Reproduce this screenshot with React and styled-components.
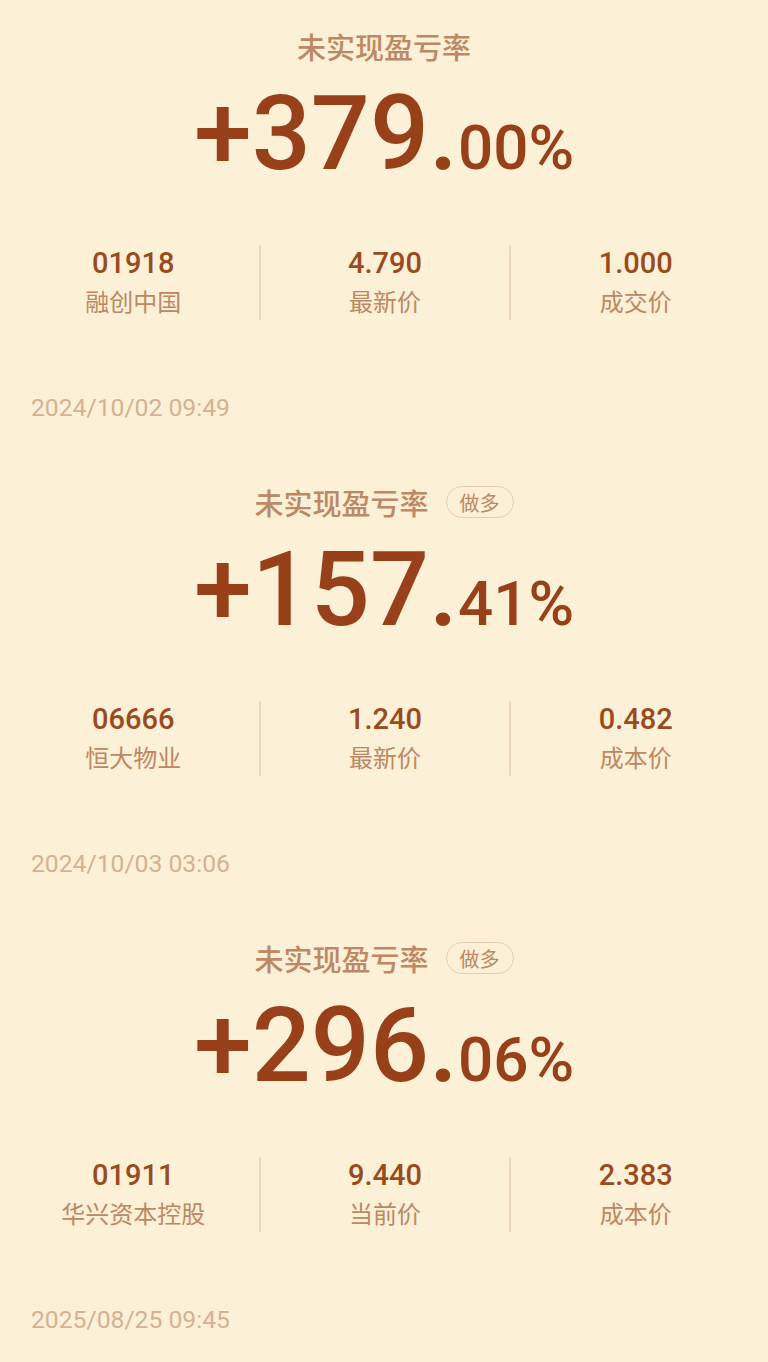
import React from 'react';
import styled, { createGlobalStyle } from 'styled-components';

const BG = '#FCF0D6';
const DEEP_BROWN = '#97401A';
const VALUE_BROWN = '#9A4A1F';
const SOFT_BROWN = '#BD8863';
const DATE_BROWN = '#D4B292';
const LINE = '#EDD8BC';

const GlobalStyle = createGlobalStyle`
  html, body {
    margin: 0;
    padding: 0;
    background: ${BG};
    overflow: hidden;
  }
  body {
    font-family: Roboto, "Noto Sans CJK SC", sans-serif;
  }
`;

const Page = styled.div`
  width: 768px;
  background: ${BG};
`;

const Card = styled.section`
  height: 456px;
  padding-top: 26px;
  box-sizing: border-box;
  display: flex;
  flex-direction: column;
`;

const TitleRow = styled.div`
  height: 40px;
  display: flex;
  align-items: center;
  justify-content: center;
  gap: 17px;
`;

const Title = styled.div`
  font-family: "Noto Sans CJK SC", sans-serif;
  font-size: 29px;
  font-weight: 500;
  line-height: 40px;
  color: ${SOFT_BROWN};
`;

const Pill = styled.div`
  height: 32px;
  padding: 0 13px;
  border: 1.5px solid #E9CDB0;
  border-radius: 16px;
  box-sizing: border-box;
  display: flex;
  align-items: center;
  font-family: "Noto Sans CJK SC", sans-serif;
  font-size: 20px;
  color: ${SOFT_BROWN};
`;

const BigNumber = styled.div`
  margin-top: 16px;
  height: 104px;
  text-align: center;
  font-family: Roboto, sans-serif;
  font-weight: 500;
  font-size: 104px;
  line-height: 104px;
  color: ${DEEP_BROWN};
  white-space: nowrap;
`;

const Decimals = styled.span`
  font-size: 62px;
  line-height: 1;
`;

const Stats = styled.div`
  margin-top: 59px;
  padding: 0 8px;
  display: grid;
  grid-template-columns: repeat(3, 1fr);
`;

const Stat = styled.div`
  height: 75px;
  display: flex;
  flex-direction: column;
  align-items: center;
  border-left: ${(p) => (p.$first ? 'none' : `2px solid ${LINE}`)};
`;

const Value = styled.div`
  font-family: Roboto, sans-serif;
  font-weight: 500;
  font-size: 29px;
  line-height: 36px;
  color: ${VALUE_BROWN};
`;

const Label = styled.div`
  margin-top: 3px;
  font-family: "Noto Sans CJK SC", sans-serif;
  font-size: 24px;
  line-height: 34px;
  color: ${SOFT_BROWN};
`;

const DateText = styled.div`
  margin-top: 73px;
  padding-left: 31px;
  font-family: Roboto, sans-serif;
  font-size: 24.7px;
  line-height: 30px;
  color: ${DATE_BROWN};
`;

const cards = [
  {
    whole: '+379.',
    decimals: '00%',
    tag: null,
    stats: [
      ['01918', '融创中国'],
      ['4.790', '最新价'],
      ['1.000', '成交价'],
    ],
    date: '2024/10/02 09:49',
  },
  {
    whole: '+157.',
    decimals: '41%',
    tag: '做多',
    stats: [
      ['06666', '恒大物业'],
      ['1.240', '最新价'],
      ['0.482', '成本价'],
    ],
    date: '2024/10/03 03:06',
  },
  {
    whole: '+296.',
    decimals: '06%',
    tag: '做多',
    stats: [
      ['01911', '华兴资本控股'],
      ['9.440', '当前价'],
      ['2.383', '成本价'],
    ],
    date: '2025/08/25 09:45',
  },
];

export default function App() {
  return (
    <Page>
      <GlobalStyle />
      {cards.map((c) => (
        <Card key={c.date}>
          <TitleRow>
            <Title>未实现盈亏率</Title>
            {c.tag && <Pill>{c.tag}</Pill>}
          </TitleRow>
          <BigNumber>
            {c.whole}
            <Decimals>{c.decimals}</Decimals>
          </BigNumber>
          <Stats>
            {c.stats.map(([v, l], i) => (
              <Stat key={l + i} $first={i === 0}>
                <Value>{v}</Value>
                <Label>{l}</Label>
              </Stat>
            ))}
          </Stats>
          <DateText>{c.date}</DateText>
        </Card>
      ))}
    </Page>
  );
}
